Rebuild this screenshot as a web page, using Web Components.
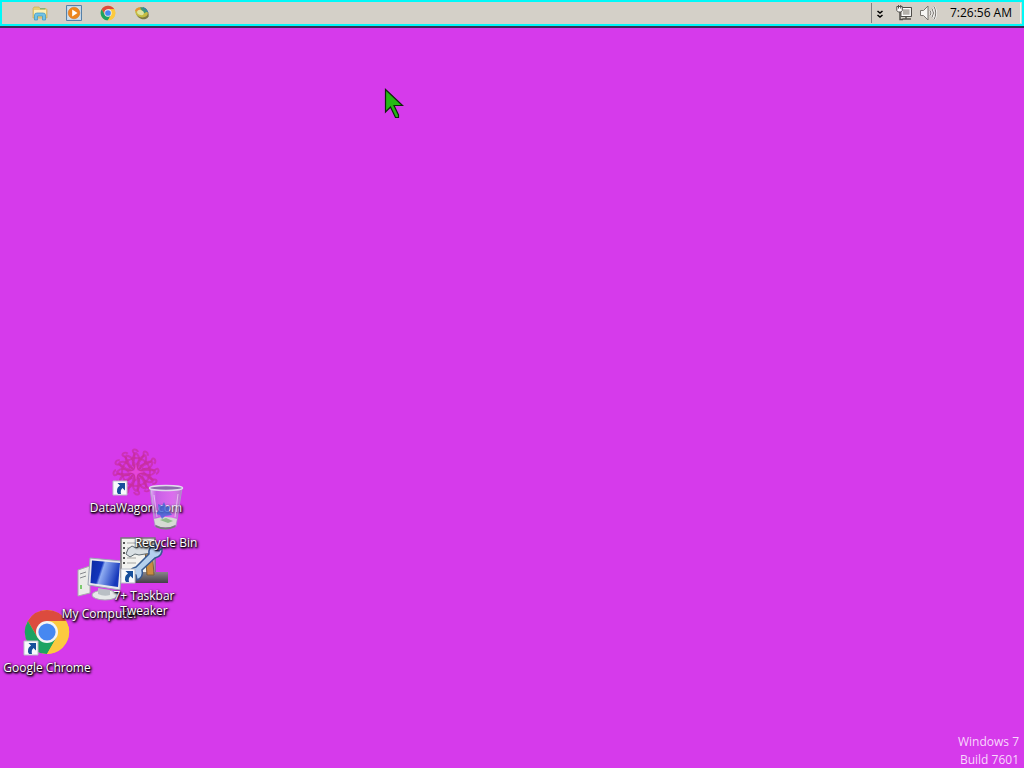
<!DOCTYPE html>
<html lang="en">
<head>
<meta charset="utf-8">
<title>Desktop</title>
<style>
html, body { height: 100%; margin: 0; }
body { font: 12px/15px "Open Sans", "Noto Sans", sans-serif; background: #d63aeb; overflow: hidden; }
</style>
</head>
<body>
<desk-top></desk-top>
<script>
const chrome = `<svg viewBox="0 0 48 48"><circle cx="24" cy="24" r="22" fill="#fcca3f"/><path d="M4.9 13A22 22 0 0 1 43.1 13H24L14.5 29.5Z" fill="#dc4b3e"/><path d="M4.9 13A22 22 0 0 0 24 46L33.5 29.5 24 24 14.5 29.5Z" fill="#1da362"/><path d="M24 13H43.1A22 22 0 0 1 24 46L33.5 29.5Z" fill="#fcca3f"/><circle cx="24" cy="24" r="11" fill="#f4f4f4"/><circle cx="24" cy="24" r="8.6" fill="#4688f1"/></svg>`;
const petals = Array.from({ length: 12 }, (_, i) =>
  `<g transform="rotate(${i * 30} 24 24)"><path d="M24 21C19 15 20 8 24 5 28 8 29 15 24 21M22 5C18 1 25 0 26 4M24 17Q30 12 32 6M19 11Q23 9 29 11"/></g>`).join("");
const art = {
  chrome,
  explorer: `<svg viewBox="0 0 16 16"><path d="M1 3.5 2 2h5l1 1.5h6l1 1V13H1Z" fill="#e7cf7c" stroke="#c7a64c" stroke-width=".6"/><path d="M2 5h12v5H2Z" fill="#fbf0b7"/><path d="M8 3.8h5" stroke="#68ad7e"/><path d="M2.500 15V10Q2.500 8 5 8h6q2.500 0 2.500 2v5h-3v-4h-5v4Z" fill="#70c3e6" stroke="#3d94c2" stroke-width=".7"/></svg>`,
  player: `<svg viewBox="0 0 16 16"><path d="M.5.500h15v15H.5Z" fill="#c4d8e9" stroke="#5580a8"/><path d="M2 2h12v12H2Z" fill="#d5dfe8"/><circle cx="8" cy="8" r="5.800" fill="#ed861d" stroke="#d56a12" stroke-width=".5"/><path d="M6.200 4.500 11.500 8l-5.300 3.500Z" fill="#fff"/></svg>`,
  globe: `<svg viewBox="0 0 16 16"><ellipse cx="8.500" cy="9" rx="6.500" ry="5" transform="rotate(20 8.500 9)" fill="#7d7a42"/><ellipse cx="7.500" cy="7.300" rx="6.500" ry="5" transform="rotate(18 7.500 7.300)" fill="#c4bd42"/><path d="M1 6Q2 2 7 2.500L5 7Z" fill="#e4923a"/><path d="M6 2.500q6-1 7.500 4l-4 2Q8 6 6 2.500" fill="#3e957b"/><path d="M9 2.500q4 1 5 5" fill="none" stroke="#3b76b3"/><ellipse cx="6.500" cy="7.500" rx="3.500" ry="2.500" transform="rotate(20 6.500 7.500)" fill="#dfe4a0"/></svg>`,
  chevrons: `<svg viewBox="0 0 16 16"><path d="m5.500 6 2.500 2 2.500-2M5.500 10l2.500 2 2.500-2" fill="none" stroke="#000" stroke-width="1.600"/></svg>`,
  network: `<svg viewBox="0 0 16 16"><path d="M5 2.500h10.500v9H5Z" fill="#aaa7a1" stroke="#4f4d4a"/><path d="M6.200 3.700h8v6.600h-8Z" fill="#b4b1ab" stroke="#fff" stroke-width="1.200"/><path d="M6.500 14h8.500M10 12v2" stroke="#55534f" stroke-width="1.500"/><path d="M4 7v7.500h3" fill="none" stroke="#4f4d4a" stroke-width="1.500"/><path d="M.8 1.500h5.500v4L4.800 7H2.300L.8 5.500Z" fill="#fff" stroke="#504e4b"/><path d="M2.500 0v3.500M4.700 0v3.500" stroke="#504e4b"/></svg>`,
  volume: `<svg viewBox="0 0 16 16"><path d="M.5 5.500h3L8 1v14l-4.500-4.500h-3Z" fill="#f6f6f4" stroke="#777570"/><path d="M10 5.500q2 2.500 0 5M12 3.500q3 4.500 0 9M14 1.500q4 6.500 0 13" fill="none" stroke="#fff" stroke-width="2"/><path d="M10 5.500q2 2.500 0 5M12 3.500q3 4.500 0 9M14 1.500q3.500 6.500 0 13" fill="none" stroke="#74716c"/></svg>`,
  wagon: `<svg viewBox="0 0 48 48"><g fill="none" stroke="#c52d93" stroke-opacity=".6" stroke-width="2">${petals}</g><path d="m24 16 1.500 6.500L32 24l-6.500 1.500L24 32l-1.500-6.500L16 24l6.500-1.500Z" fill="#e645d8"/></svg>`,
  bin: `<svg viewBox="0 0 48 48"><defs><linearGradient id="g"><stop stop-color="#eee8fb" stop-opacity=".8"/><stop offset=".2" stop-color="#b68ade" stop-opacity=".45"/><stop offset=".7" stop-color="#e5c9f3" stop-opacity=".35"/><stop offset="1" stop-color="#a488b9" stop-opacity=".7"/></linearGradient></defs><path d="m8 5 5 38q10 6 21 0L40 5Z" fill="url(#g)" stroke="#af94c9"/><path d="m12 36 1.500 6q10 5 20 0l1.500-6q-11-4-23 0" fill="#d5dbd3"/><path d="m18 37 6-2 7 3-5 2Z" fill="#8fbc8c"/><path d="M13.500 42q10 5 20 0v2q-10 5-20 0Z" fill="#777b7c"/><path d="m16 21 4 2 2-4 2 5 4-1-1 5 3 4-7 1-3 3-2-4-4-1 3-4Z" fill="#3568d6" opacity=".75"/><ellipse cx="24" cy="5" rx="16.500" ry="2.500" fill="#8d68ad" stroke="#e1dcec" stroke-width="1.500"/><path d="M12 12l3 22M36 11l-3 23" stroke="#fff" opacity=".5"/></svg>`,
  computer: `<svg viewBox="0 0 48 48"><defs><linearGradient id="g" x2="1" y2=".3"><stop stop-color="#0a2ba1"/><stop offset=".4" stop-color="#1335bd"/><stop offset=".48" stop-color="#8fadf2"/><stop offset="1" stop-color="#1638bb"/></linearGradient></defs><path d="m2 16 12-4v27L2 42Z" fill="#e9ebe8" stroke="#a9aaad"/><path d="m4 20 6-2M4 24l6-2" stroke="#85888c"/><path d="M5 31v4" stroke="#55bf45" stroke-width="1.500"/><ellipse cx="29" cy="41" rx="13" ry="5" fill="#e6e8e9" stroke="#a6aab0"/><path d="m22 34 12 2v5q-6 2-12-1Z" fill="#b9bfc5"/><path d="m14 4 32 3-2 29-32-5Z" fill="#e7e9ed" stroke="#9ba5b4"/><path d="m16 6.500 28 2.500-2 24-27.500-4Z" fill="url(#g)"/></svg>`,
  tweaker: `<svg viewBox="0 0 48 48"><defs><linearGradient id="g" x2="0" y2="1"><stop stop-color="#8a8589"/><stop offset="1" stop-color="#444047"/></linearGradient></defs><path d="M1 2h34v39H1Z" fill="#f2f2ef" stroke="#77757a" stroke-width="1.500"/><path d="M7 7h9M7 12h9M7 17h9M7 22h9M7 27h9" stroke="#a6a6a3"/><path d="M3 7h2M3 12h2M3 17h2M3 22h2M3 27h2" stroke="#555" stroke-width="2"/><path d="M3 36h45v11H3Z" fill="url(#g)"/><path d="m25 14 7-2 2 27h-7Z" fill="#c98b41" stroke="#795e39"/><path d="m8 13 4-3 4 2 6-3 9 2 2 6-8 1-6 1-4-1-5 3-4-3Z" fill="#d9e0e4" stroke="#606b73"/><path d="M29 18q-1-7 6-9l1 5 3 1 3-3q1 8-7 10L22 34q2 7-5 10l-1-5-4-1-3 3q-1-8 7-10Z" fill="#b4d0ee" stroke="#355991" stroke-width="1.500"/></svg>`,
  shortcut: `<svg viewBox="0 0 16 16"><path d="M1 1h14v14H1Z" fill="#f8fafc" stroke="#b9bdc7"/><path d="M5.500 3H13v7.500L10.500 8Q8 10 9 14H6Q3 9 8 5.500Z" fill="#174f9b"/></svg>`
};
function define(name, make) {
  customElements.define(name, class extends HTMLElement {
    connectedCallback() {
      if (!this.shadowRoot) this.attachShadow({ mode: "open" }).innerHTML = make(this);
    }
  });
}
define("art-icon", el => `<style>:host{display:block;width:16px;height:16px;flex:none}svg{display:block;width:100%;height:100%;overflow:visible}</style>${art[el.getAttribute("name")]}`);

define("bar-button", el => `<style>
:host{display:block}
button{display:block;margin:0;padding:0;border:0;background:none}
</style><button aria-label="${el.getAttribute("label")}"><art-icon name="${el.getAttribute("icon")}"></art-icon></button>`);

define("task-bar", () => `<style>
:host{display:block;flex:none;border-bottom:2px solid #3c2b58}
.bar{display:flex;justify-content:space-between;background:#d4d0c8;border:2px solid #00f8f8}
nav{display:flex;gap:18px;padding:3px 0 3px 30px}
</style><div class="bar"><nav><slot></slot></nav><slot name="tray"></slot></div>`);

define("system-tray", () => `<style>
:host{display:flex;box-sizing:border-box;height:20px;margin:1px 1px 0 0;padding:2px 8px 0 0;gap:8px;border:1px solid #808080;border-right-color:#f4f2ee;border-width:0 1px 0 1px;line-height:16px;color:#000}
time{margin-left:6px}
bar-button:first-child{margin-right:-2px}
</style><bar-button icon="chevrons" label="Show hidden icons"></bar-button><bar-button icon="network" label="Network"></bar-button><bar-button icon="volume" label="Volume"></bar-button><time datetime="07:26:56">7:26:56 AM</time>`);

define("desktop-icon", el => `<style>
:host{display:block;position:absolute;width:96px}
button{display:flex;flex-direction:column;align-items:center;gap:4px;width:100%;margin:0;padding:0;border:0;background:none;font:inherit;color:#fff;text-align:center;text-shadow:1px 1px 2px #000,0 1px 2px #000,1px 1px 3px #000}
.pic{position:relative}
.big{width:48px;height:48px}
.badge{position:absolute;left:0;bottom:0}
</style><button><span class="pic"><art-icon class="big" name="${el.getAttribute("icon")}"></art-icon>${el.hasAttribute("shortcut") ? '<art-icon class="badge" name="shortcut"></art-icon>' : ""}</span><span><slot></slot></span></button>`);

define("build-mark", () => `<style>
:host{display:block;position:absolute;right:5px;bottom:-1px;text-align:right;line-height:18px;color:#f8d8fc}
p{margin:0}
</style><p>Windows 7</p><p>Build 7601</p>`);

define("mouse-pointer", () => `<style>
:host{display:block;position:absolute;left:384px;top:60px;width:20px;height:32px;pointer-events:none}svg{display:block}
</style><svg width="20" height="32" viewBox="0 0 20 32"><path d="M1.500 1.500V24l5-5 5 10.500h3V27l-4.500-9.500h8.500Z" fill="#25b914" stroke="#10240c" stroke-width="1.200"/></svg>`);

define("desk-top", () => `<style>
:host{display:flex;flex-direction:column;height:100vh;background:#d63aeb}
main{position:relative;flex:1}
</style>
<task-bar>
<bar-button icon="explorer" label="Windows Explorer"></bar-button>
<bar-button icon="player" label="Media Player"></bar-button>
<bar-button icon="chrome" label="Google Chrome"></bar-button>
<bar-button icon="globe" label="Web browser"></bar-button>
<system-tray slot="tray"></system-tray>
</task-bar>
<main>
<desktop-icon icon="wagon" shortcut style="left:88px;top:420px">DataWagon.com</desktop-icon>
<desktop-icon icon="chrome" shortcut style="left:-1px;top:580px">Google Chrome</desktop-icon>
<desktop-icon icon="computer" style="left:52px;top:526px">My Computer</desktop-icon>
<desktop-icon icon="tweaker" shortcut style="left:96px;top:508px">7+ Taskbar Tweaker</desktop-icon>
<desktop-icon icon="bin" style="left:118px;top:455px">Recycle Bin</desktop-icon>
<build-mark></build-mark>
<mouse-pointer></mouse-pointer>
</main>`);
</script>
</body>
</html>
